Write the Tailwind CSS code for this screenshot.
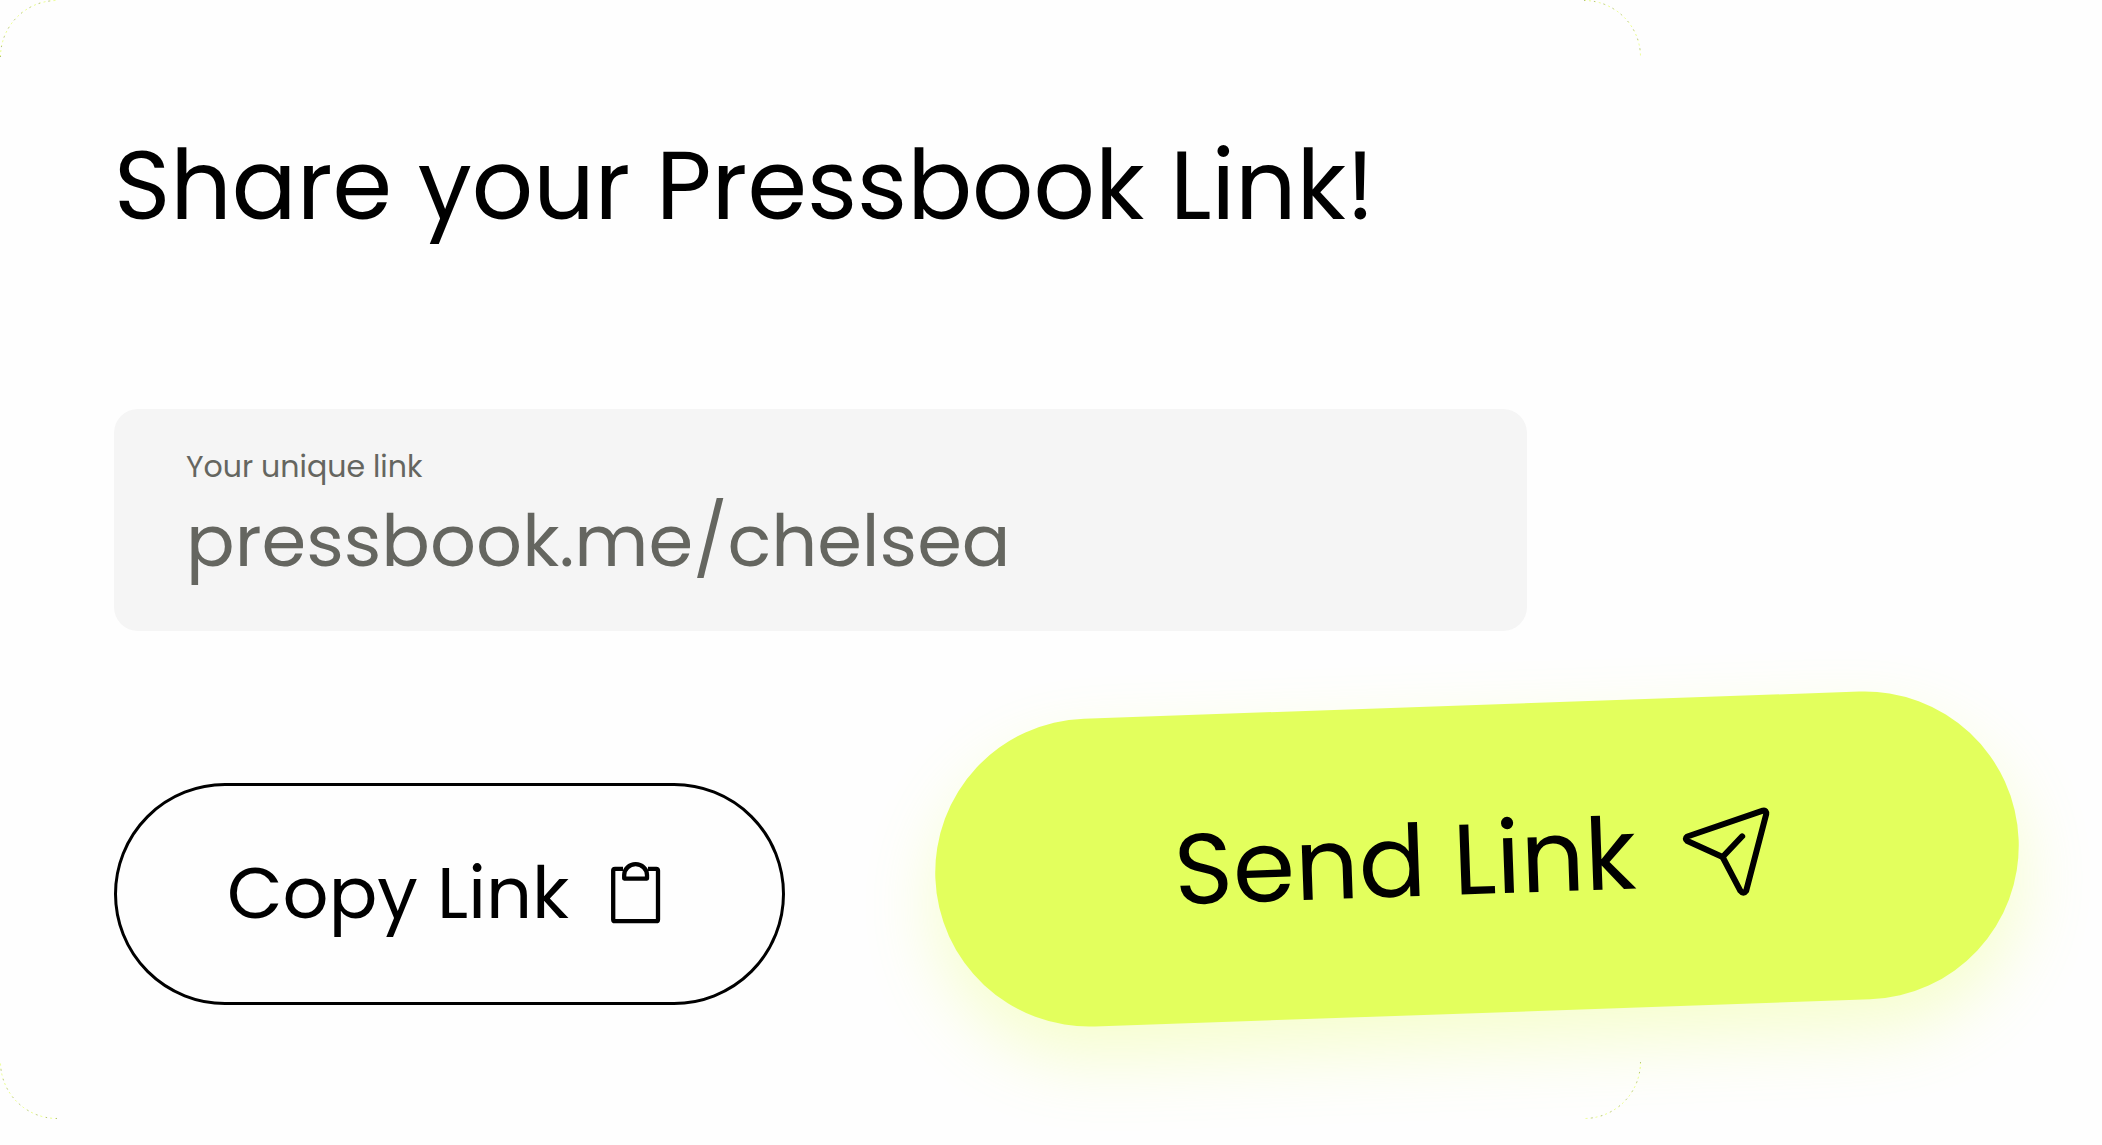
<!DOCTYPE html>
<html lang="en">
<head>
  <meta charset="UTF-8" />
  <meta name="viewport" content="width=device-width, initial-scale=1.0" />
  <title>Share your Pressbook Link</title>
  <script src="https://cdn.jsdelivr.net/npm/@tailwindcss/browser@4"></script>
</head>
<body class="bg-[#fefefe] h-[1145px] overflow-hidden text-black font-[Poppins,Inter,sans-serif]">
  <main class="relative w-[1641px] h-[1119px] rounded-[57px] px-[114px] pt-[126px]">
    <!-- Card corners -->
    <svg class="absolute inset-0 w-full h-full" viewBox="0 0 1641 1119" fill="none" stroke="#e3ff5d" stroke-opacity="0.7" stroke-dasharray="2 3">
      <path d="M.5 57A56.500 56.500 0 0 1 57 .5M1584 .5A56.500 56.500 0 0 1 1640.500 57M1640.500 1062A56.500 56.500 0 0 1 1584 1118.500M57 1118.500A56.500 56.500 0 0 1 .5 1062" />
      <path stroke="#888" stroke-dasharray="1 9" d="M.5 57A56.500 56.500 0 0 1 57 .5M1584 .5A56.500 56.500 0 0 1 1640.500 57M1640.500 1062A56.500 56.500 0 0 1 1584 1118.500M57 1118.500A56.500 56.500 0 0 1 .5 1062" />
    </svg>

    <h1 class="h-[120px] leading-[120px] text-[96px] whitespace-nowrap">Share your Pressbook Link!</h1>

    <!-- Link field -->
    <div class="mt-[163px] w-[1413px] h-[222px] rounded-[24px] bg-[#f5f5f5] pl-[72px] pt-[37px] text-[#656660] whitespace-nowrap">
      <div class="h-[42px] leading-[42px] text-[30px]">Your unique link</div>
      <div class="h-[90px] leading-[90px] mt-[8px] text-[72px]">pressbook.me/chelsea</div>
    </div>

    <!-- Actions -->
    <div class="mt-[57px] flex items-start whitespace-nowrap">
      <button class="mt-[95px] w-[671px] h-[222px] shrink-0 rounded-full border-[3px] border-black flex items-center pl-[110px]">
        <span class="w-[383px] text-left text-[72px] leading-[90px] -mt-[2px]">Copy Link</span>
        <svg class="w-[51px] h-[62px] -mt-[3px]" viewBox="0 0 51 62" fill="none" stroke="#000" stroke-width="4.300" stroke-linejoin="round">
          <path d="M13 6.800H5Q3.200 6.800 3.200 8.600V57.400Q3.200 59.200 5 59.200H46.200Q48 59.200 48 57.400V8.600Q48 6.800 46.200 6.800H38" />
          <path d="M14.200 16.600V13A11.400 10.800 0 0 1 37 13V16.600Z" />
        </svg>
      </button>
      <button class="mt-[17px] ml-[150px] w-[1084px] h-[308px] shrink-0 -rotate-2 rounded-full bg-[#e3ff5d] shadow-[0_32px_70px_rgb(227_255_93/0.3)] flex items-center justify-center gap-[42px] pr-[6px]">
        <span class="text-[100px] leading-[120px]">Send Link</span>
        <svg class="w-24 h-24 mt-[2px] rotate-2" viewBox="18 25 96 96" fill="none" stroke="#000" stroke-width="6" stroke-linecap="round" stroke-linejoin="round">
          <path d="M27.500 58.200L103 32.400Q106.800 31.600 106.300 36L86.300 112.500Q83.500 116.500 80.500 112.500L62.700 78.700L27.500 62.700Q24.300 60.400 27.500 58.200Z" />
          <path d="M62.700 78.700L82.300 58" />
        </svg>
      </button>
    </div>
  </main>
</body>
</html>
